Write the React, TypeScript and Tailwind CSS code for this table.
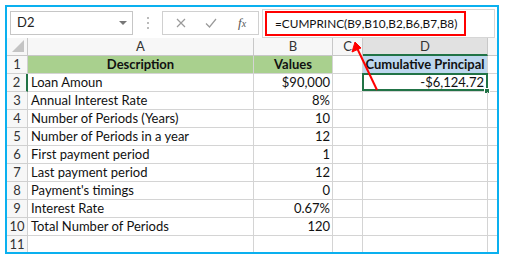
const font = "font-['Lato','Open_Sans',sans-serif]";

type Row = { label: string; value: string };

const rows: Row[] = [
  { label: "Loan Amoun", value: "$90,000" },
  { label: "Annual Interest Rate", value: "8%" },
  { label: "Number of Periods (Years)", value: "10" },
  { label: "Number of Periods in a year", value: "12" },
  { label: "First payment period", value: "1" },
  { label: "Last payment period", value: "12" },
  { label: "Payment's timings", value: "0" },
  { label: "Interest Rate", value: "0.67%" },
  { label: "Total Number of Periods", value: "120" },
];

const cell = "h-[18px] border-r border-b border-[#d4d4d4] text-[13px] leading-[17px] text-[#111] whitespace-nowrap";
const rowHead =
  "h-[18px] border-r border-b border-[#d0d0d0] bg-[#f7f7f7] text-[13px] leading-[17px] text-[#333] text-center";

function FormulaBar() {
  return (
    <div className="h-[38px] flex items-start pt-[4px] pl-[3px] pr-[2px]">
      <div className="h-[24px] w-[123px] border border-[#c6c6c6] bg-white flex items-center justify-between pl-[6px] pr-[5px]">
        <span className="text-[13px] text-[#222]">D2</span>
        <svg width="8" height="5" viewBox="0 0 8 5">
          <path d="M0 0 L8 0 L4 4 Z" fill="#777" />
        </svg>
      </div>
      <div className="w-[29px] h-[24px] flex flex-col items-center justify-center gap-[3px]">
        <span className="w-[2px] h-[2px] bg-[#bbb]" />
        <span className="w-[2px] h-[2px] bg-[#bbb]" />
        <span className="w-[2px] h-[2px] bg-[#bbb]" />
      </div>
      <div className="h-[24px] w-[97px] border border-[#d0d0d0] bg-white flex items-center">
        <svg className="ml-[13px]" width="10" height="10" viewBox="0 0 10 10">
          <path d="M1 1 L9 9 M9 1 L1 9" stroke="#9a9a9a" strokeWidth="1.2" fill="none" />
        </svg>
        <svg className="ml-[19px]" width="12" height="10" viewBox="0 0 12 10">
          <path d="M1 5.5 L4.5 9 L11 1" stroke="#9a9a9a" strokeWidth="1.2" fill="none" />
        </svg>
        <span className="ml-[21px] text-[13px] italic text-[#555] font-['Liberation_Serif',serif]">
          f<span className="text-[10px]">x</span>
        </span>
      </div>
      <div className="ml-[3px] -mt-[2px] h-[29px] flex-1 border border-[#d6d6d6] bg-white flex items-center pl-[2px]">
        <div className="h-[25px] w-[201px] border-2 border-[#ff0000] flex items-center pl-[8px]">
          <span className="text-[11.8px] text-[#111]">=CUMPRINC(B9,B10,B2,B6,B7,B8)</span>
        </div>
      </div>
    </div>
  );
}

function Grid() {
  return (
    <div className="grid grid-cols-[21px_226px_79px_30px_125px_1fr] auto-rows-[18px]">
      {/* column headers */}
      <div className="h-[18px] border-r border-b border-[#c8c8c8] bg-[#f7f7f7] relative">
        <svg className="absolute right-[3px] bottom-[3px]" width="12" height="12" viewBox="0 0 12 12">
          <path d="M12 0 L12 12 L0 12 Z" fill="#c4c4c4" />
        </svg>
      </div>
      {["A", "B", "C"].map((c) => (
        <div
          key={c}
          className="h-[18px] border-r border-b border-[#c8c8c8] bg-[#f7f7f7] text-[13px] leading-[17px] text-[#333] text-center"
        >
          {c}
        </div>
      ))}
      <div className="h-[18px] border-r border-[#c8c8c8] border-b-2 border-b-[#217346] bg-[#e1e1e1] text-[13px] leading-[16px] text-[#333] text-center">
        D
      </div>
      <div className="h-[18px] border-b border-[#c8c8c8] bg-[#f7f7f7]" />

      {/* row 1 */}
      <div className={rowHead}>1</div>
      <div className={`${cell} bg-[#a9d08e] text-center font-bold`}>Description</div>
      <div className={`${cell} bg-[#a9d08e] text-center font-bold`}>Values</div>
      <div className={cell} />
      <div className={`${cell} bg-[#bdd7ee] text-center font-bold`}>Cumulative Principal</div>
      <div className={`${cell} border-r-0`} />

      {rows.map((r, i) => (
        <Row key={r.label} n={i + 2} label={r.label} value={r.value} />
      ))}

      {/* row 11, cut off by the frame */}
      <div className={rowHead}>11</div>
      <div className={cell} />
      <div className={cell} />
      <div className={cell} />
      <div className={cell} />
      <div className={`${cell} border-r-0`} />
    </div>
  );
}

function Row({ n, label, value }: { n: number; label: string; value: string }) {
  const active = n === 2;
  return (
    <>
      <div className={`${rowHead} ${active ? "bg-[#e1e1e1] border-r-2 border-r-[#217346]" : ""}`}>{n}</div>
      <div className={`${cell} pl-[3px]`}>{label}</div>
      <div className={`${cell} text-right pr-[2px]`}>{value}</div>
      <div className={cell} />
      <div className={`${cell} relative text-right pr-[3px]`}>
        {active && (
          <>
            <span>-$6,124.72</span>
            <div className="absolute -left-[1px] -top-[1px] -right-[1px] -bottom-[0px] border-2 border-[#217346]" />
            <div className="absolute -right-[3px] -bottom-[3px] w-[6px] h-[6px] bg-[#217346] border border-white" />
          </>
        )}
      </div>
      <div className={`${cell} border-r-0`} />
    </>
  );
}

export default function App() {
  return (
    <div className={`w-[505px] h-[261px] bg-white relative ${font}`}>
      <div className="absolute left-[5px] top-[5px] w-[494px] h-[249px] border-2 border-[#0ab0ef] bg-white overflow-hidden flex flex-col">
        <FormulaBar />
        <Grid />
      </div>
      {/* pointer from the result cell up to the formula */}
      <svg className="absolute inset-0 pointer-events-none" width="505" height="261" viewBox="0 0 505 261">
        <line x1="377" y1="90" x2="357" y2="48" stroke="#ff0000" strokeWidth="2" />
        <path d="M355 42 L352 52 L361 48 Z" fill="#ff0000" stroke="#ff0000" strokeWidth="1" />
      </svg>
    </div>
  );
}
